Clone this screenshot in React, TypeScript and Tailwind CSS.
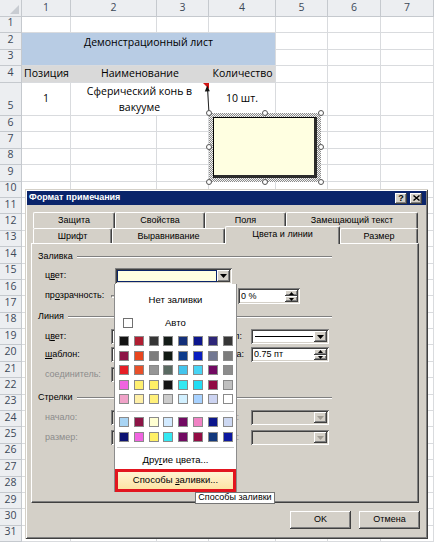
import React from "react";

const RAISED =
  "shadow-[inset_-1px_-1px_#404040,inset_1px_1px_#ffffff,inset_-2px_-2px_#808080]";
const SUNKEN =
  "shadow-[inset_1px_1px_#808080,inset_-1px_-1px_#ffffff,inset_2px_2px_#404040,inset_-2px_-2px_#d4d0c8]";

const G1 = [
  ["bg-[#141414]", "bg-[#b01e32]", "bg-[#363636]", "bg-[#141c18]", "bg-[#14307a]", "bg-[#0c168c]", "bg-[#2e2678]", "bg-[#363636]"],
  ["bg-[#8c1446]", "bg-[#e8461e]", "bg-[#7c7c7c]", "bg-[#121a14]", "bg-[#0e3c8c]", "bg-[#0a1ec0]", "bg-[#727892]", "bg-[#7c7c7c]"],
  ["bg-[#e61e26]", "bg-[#e8502a]", "bg-[#969696]", "bg-[#5a6a62]", "bg-[#44c4ec]", "bg-[#48d4f4]", "bg-[#720a62]", "bg-[#8c8c8c]"],
  ["bg-[#f064e0]", "bg-[#fff070]", "bg-[#fff066]", "bg-[#141414]", "bg-[#34e8f2]", "bg-[#22dcf4]", "bg-[#920c44]", "bg-[#c0c0c0]"],
  ["bg-[#f0a2c8]", "bg-[#fff0a8]", "bg-[#fff07a]", "bg-[#cccccc]", "bg-[#d2f0ff]", "bg-[#a8d2ff]", "bg-[#cdd4f2]", "bg-[#ffffff]"],
];
const G2 = [
  ["bg-[#a8d4f4]", "bg-[#8c1446]", "bg-[#ffffd2]", "bg-[#d2eaff]", "bg-[#720a62]", "bg-[#f082c4]", "bg-[#0c168c]", "bg-[#cdd8f2]"],
  ["bg-[#0c1272]", "bg-[#f064e0]", "bg-[#fff066]", "bg-[#34e8f2]", "bg-[#720a62]", "bg-[#920c44]", "bg-[#12387c]", "bg-[#0c18a0]"],
];

const HANDLES = [
  "left-[206px] top-[110px]",
  "left-[262px] top-[110px]",
  "left-[318px] top-[110px]",
  "left-[206px] top-[144px]",
  "left-[318px] top-[144px]",
  "left-[206px] top-[179px]",
  "left-[262px] top-[179px]",
  "left-[318px] top-[179px]",
];

function Sheet() {
  const grid = "border-r border-b border-[#d9dbde]";
  const hdr =
    "bg-[#eceef1] border-r border-b border-[#c5c9ce] text-[#3c4858] flex justify-center";
  const cells: React.ReactNode[] = [];
  for (let r = 0; r <= 31; r++) {
    for (let c = 0; c <= 7; c++) {
      const k = r + "-" + c;
      if (r === 0 && c === 0) {
        cells.push(
          <div key={k} className={hdr + " items-end justify-end p-[2px]"}>
            <div className="w-0 h-0 border-l-[9px] border-l-transparent border-b-[9px] border-b-[#c8ccd2]" />
          </div>
        );
      } else if (r === 0) {
        cells.push(
          <div key={k} className={hdr + " items-center"}>
            {c}
          </div>
        );
      } else if (c === 0) {
        cells.push(
          <div key={k} className={hdr + " items-end pb-[1px]"}>
            {r}
          </div>
        );
      } else if ((r === 2 || r === 3 || r === 4) && c <= 4) {
        if (r === 2 && c === 1) {
          cells.push(
            <div key={k} className="col-span-4 row-span-2 bg-[#b8cce4] border-r border-b border-[#d9dbde] flex justify-center pt-[2px]">
              Демонстрационный лист
            </div>
          );
        } else if (r === 4 && c === 1) {
          cells.push(
            <div key={k} className="col-span-4 bg-[#d9d9d9] border-r border-b border-[#d9dbde] grid grid-cols-[49px_138px_67px] items-center">
              <div className="text-center">Позиция</div>
              <div className="text-center">Наименование</div>
              <div className="text-center whitespace-nowrap">Количество</div>
            </div>
          );
        }
      } else if (r === 5 && c === 1) {
        cells.push(
          <div key={k} className={grid + " flex items-center justify-center"}>
            1
          </div>
        );
      } else if (r === 5 && c === 2) {
        cells.push(
          <div key={k} className={grid + " col-span-2 flex flex-col items-center justify-center leading-[16px]"}>
            <span className="whitespace-nowrap">Сферический конь в</span>
            <span>вакууме</span>
          </div>
        );
      } else if (r === 5 && c === 3) {
        continue;
      } else if (r === 5 && c === 4) {
        cells.push(
          <div key={k} className={grid + " flex items-center justify-center"}>
            10 шт.
          </div>
        );
      } else {
        cells.push(<div key={k} className={grid} />);
      }
    }
  }
  return (
    <div className="grid grid-cols-[22px_49px_86px_52px_67px_52px_53px_53px] grid-rows-[17px_16px_17px_16px_17px_33px_repeat(26,16.4px)] font-['Open_Sans',sans-serif] text-[10.5px] text-black">
      {cells}
    </div>
  );
}

function CommentShape() {
  return (
    <>
      <div className="absolute left-[203px] top-[83px] w-0 h-0 border-t-[6px] border-t-[#d01414] border-l-[6px] border-l-transparent" />
      <svg className="absolute left-[200px] top-[82px]" width="16" height="34" viewBox="0 0 16 34">
        <line x1="7.5" y1="7" x2="9" y2="31" stroke="#222" strokeWidth="1" />
        <path d="M7.2 3.5 L4.8 9.5 L9.8 9.3 Z" fill="#111" />
      </svg>
      <div className="absolute left-[209px] top-[113px] w-[112px] h-[69px] p-[4px] bg-[repeating-conic-gradient(#8a8a8a_0_25%,#f4f4f4_0_50%)] bg-[length:2px_2px]">
        <div className="w-full h-full bg-[#ffffe1] border border-black border-r-[3px] border-b-[3px] border-r-[#2a2a2a] border-b-[#2a2a2a]" />
      </div>
      {HANDLES.map((h, i) => (
        <div key={i} className={"absolute w-[6px] h-[6px] rounded-full bg-white border border-[#555] " + h} />
      ))}
    </>
  );
}

function DownArrow({ color = "#000000" }: { color?: string }) {
  return (
    <svg width="7" height="4" viewBox="0 0 7 4">
      <path d="M0 0H7L3.5 4Z" fill={color} />
    </svg>
  );
}
function UpArrow() {
  return (
    <svg width="5" height="3" viewBox="0 0 5 3">
      <path d="M0 3H5L2.5 0Z" fill="#000" />
    </svg>
  );
}
function SmallDown() {
  return (
    <svg width="5" height="3" viewBox="0 0 5 3">
      <path d="M0 0H5L2.5 3Z" fill="#000" />
    </svg>
  );
}

function DropBtn({ disabled }: { disabled?: boolean }) {
  return (
    <div className={"w-[13px] h-full flex items-center justify-center bg-[#d4d0c8] " + RAISED}>
      <DownArrow color={disabled ? "#a09c94" : "#000000"} />
    </div>
  );
}

function Combo({ className, disabled, children }: { className: string; disabled?: boolean; children?: React.ReactNode }) {
  return (
    <div className={"flex h-[15px] p-[2px] " + (disabled ? "bg-[#d4d0c8] " : "bg-white ") + SUNKEN + " " + className}>
      <div className="flex-1 flex items-center">{children}</div>
      <DropBtn disabled={disabled} />
    </div>
  );
}

function Spinner({ className, value }: { className: string; value: string }) {
  return (
    <div className={"flex h-[15px] p-[2px] bg-white " + SUNKEN + " " + className}>
      <div className="flex-1 flex items-center pl-[1px] leading-none">
        <span>{value}</span>
      </div>
      <div className="w-[13px] h-full flex flex-col">
        <div className={"flex-1 flex items-center justify-center bg-[#d4d0c8] " + RAISED}>
          <UpArrow />
        </div>
        <div className={"flex-1 flex items-center justify-center bg-[#d4d0c8] " + RAISED}>
          <SmallDown />
        </div>
      </div>
    </div>
  );
}

function GroupHeader({ label, className }: { label: string; className?: string }) {
  return (
    <div className={"flex items-center h-[12px] " + (className || "")}>
      <span>{label}</span>
      <div className="ml-[4px] flex-1 h-[2px] border-t border-t-[#808080] border-b border-b-white" />
    </div>
  );
}

function Tab({ className, label, active }: { className: string; label: string; active?: boolean }) {
  return (
    <div
      className={
        "flex items-center justify-center bg-[#d4d0c8] border-t border-l border-white border-r border-r-[#404040] rounded-tl-[2px] rounded-tr-[2px] shadow-[inset_-1px_0_#808080] " +
        (active ? "relative z-10 -mb-px pb-[2px] " : "pt-[1px] ") +
        className
      }
    >
      <span>{label}</span>
    </div>
  );
}

function Panel() {
  return (
    <div className="ml-[4px] w-[388px] h-[260px] border-l border-t border-white border-r border-b border-r-[#404040] border-b-[#404040] shadow-[inset_-1px_-1px_#808080]">
      <div className="flex flex-col pt-[7px] pl-[6px] w-[300px]">
        <GroupHeader label="Заливка" />
        <div className="mt-[5px] flex h-[16px] items-center">
          <div className="w-[77px] pl-[7px]">
            ц<u>в</u>ет:
          </div>
          <div className={"w-[117px] h-[16px] flex p-[2px] bg-white " + SUNKEN}>
            <div className="flex-1 border border-[#0a246a] bg-[#ffffe1]" />
            <DropBtn />
          </div>
        </div>
        <div className="mt-[4px] flex h-[16px] items-center">
          <div className="w-[73px] pl-[7px]">
            пр<u>о</u>зрачность:
          </div>
          <div className="w-[120px] h-[16px] flex items-center">
            <div className="w-full h-[3px] border-t border-l border-[#808080] border-b border-r border-b-white border-r-white" />
          </div>
          <Spinner className="ml-[7px] w-[62px] h-[16px]" value="0 %" />
        </div>
        <GroupHeader className="mt-[7px]" label="Линия" />
        <div className="mt-[6px] flex h-[15px] items-center">
          <div className="w-[73px] pl-[7px]">
            ц<u>в</u>ет:
          </div>
          <Combo className="w-[94px]">
            <div className="mx-[2px] h-px w-full bg-black" />
          </Combo>
          <div className="w-[46px] pr-[9px] text-right">тип:</div>
          <Combo className="w-[78px]">
            <div className="ml-[2px] mr-[1px] h-px w-full bg-black" />
          </Combo>
        </div>
        <div className="mt-[3px] flex h-[15px] items-center">
          <div className="w-[73px] pl-[7px]">
            <u>ш</u>аблон:
          </div>
          <Combo className="w-[94px]">
            <div className="mx-[2px] h-px w-full bg-black" />
          </Combo>
          <div className="w-[46px] pr-[12px] text-right">толщина:</div>
          <Spinner className="w-[78px]" value="0.75 пт" />
        </div>
        <div className="mt-[5px] flex h-[15px] items-center">
          <div className="w-[73px] pl-[7px] text-[#8c8c8c] whitespace-nowrap">соединитель:</div>
          <Combo className="w-[94px]" disabled />
        </div>
        <GroupHeader className="mt-[10px]" label="Стрелки" />
        <div className="mt-[6px] flex h-[15px] items-center">
          <div className="w-[73px] pl-[7px] text-[#8c8c8c]">начало:</div>
          <Combo className="w-[94px]" disabled />
          <div className="w-[46px] pr-[12px] text-right text-[#8c8c8c]">конец:</div>
          <Combo className="w-[78px]" disabled />
        </div>
        <div className="mt-[5px] flex h-[15px] items-center">
          <div className="w-[73px] pl-[7px] text-[#8c8c8c]">размер:</div>
          <Combo className="w-[94px]" disabled />
          <div className="w-[46px] pr-[12px] text-right text-[#8c8c8c]">размер:</div>
          <Combo className="w-[78px]" disabled />
        </div>
      </div>
    </div>
  );
}

function TitleBtn({ children }: { children: React.ReactNode }) {
  return (
    <div className={"w-[12px] h-[11px] flex items-center justify-center bg-[#d4d0c8] text-black font-bold text-[9px] leading-none " + RAISED}>
      {children}
    </div>
  );
}

function Dialog() {
  return (
    <div className="absolute left-[25px] top-[189px] w-[403px] h-[350px] bg-[#d4d0c8] flex flex-col p-[2px] shadow-[inset_1px_1px_#d4d0c8,inset_-1px_-1px_#404040,inset_2px_2px_#ffffff,inset_-2px_-2px_#808080] font-['Liberation_Sans',Arial,sans-serif] text-[9px] text-black">
      <div className="h-[14px] flex items-center bg-[#0a246a] pl-[2px] pr-[4px]">
        <span className="flex-1 text-white font-bold text-[9px]">Формат примечания</span>
        <div className="flex gap-[3px]">
          <TitleBtn>?</TitleBtn>
          <TitleBtn>
            <svg width="7" height="6" viewBox="0 0 7 6">
              <path d="M0.5 0.5L6.5 5.5M6.5 0.5L0.5 5.5" stroke="#000" strokeWidth="1.4" />
            </svg>
          </TitleBtn>
        </div>
      </div>
      <div className="mt-[7px] ml-[6px] flex flex-col">
        <div className="flex h-[16px]">
          <Tab className="w-[82px] h-[16px]" label="Защита" />
          <Tab className="w-[90px] h-[16px]" label="Свойства" />
          <Tab className="w-[81px] h-[16px]" label="Поля" />
          <Tab className="w-[132px] h-[16px]" label="Замещающий текст" />
        </div>
        <div className="flex h-[15px] items-end">
          <Tab className="w-[79px] h-[15px]" label="Шрифт" />
          <Tab className="w-[113px] h-[15px]" label="Выравнивание" />
          <Tab className="w-[115px] h-[18px]" label="Цвета и линии" active />
          <Tab className="w-[78px] h-[15px]" label="Размер" />
        </div>
      </div>
      <Panel />
      <div className="mt-[8px] flex justify-end gap-[8px] pr-[6px]">
        <div className={"w-[61px] h-[18px] flex items-center justify-center bg-[#d4d0c8] " + RAISED}>OK</div>
        <div className={"w-[61px] h-[18px] flex items-center justify-center bg-[#d4d0c8] " + RAISED}>Отмена</div>
      </div>
    </div>
  );
}

function Swatches({ rows }: { rows: string[][] }) {
  return (
    <div className="grid grid-cols-[repeat(8,10px)] gap-x-[4.8px] gap-y-[4.6px] pl-[4px]">
      {rows.flat().map((c, i) => (
        <div key={i} className={"w-[10px] h-[10px] border border-[#8a8a8a] " + c} />
      ))}
    </div>
  );
}

function ColorPopup() {
  return (
    <div className="absolute left-[114px] top-[284px] w-[123px] h-[208px] bg-white border-l border-r border-[#8c8c8c] flex flex-col font-['Liberation_Sans',Arial,sans-serif] text-[9.5px] text-black">
      <div className="mt-[9px] h-[14px] flex items-center justify-center">Нет заливки</div>
      <div className="mt-[11px] h-[10px] flex items-center">
        <div className="ml-[8px] w-[10px] h-[10px] border border-[#707070] bg-white" />
        <span className="ml-[32px]">Авто</span>
      </div>
      <div className="mt-[8px]">
        <Swatches rows={G1} />
      </div>
      <div className="mt-[7px] mx-[2px] h-px bg-[#c8c8c8]" />
      <div className="mt-[5px]">
        <Swatches rows={G2} />
      </div>
      <div className="mt-[5px] mx-[2px] h-px bg-[#c8c8c8]" />
      <div className="mt-[6px] h-[13px] flex items-center justify-center">
        <span>
          Дру<u>г</u>ие цвета...
        </span>
      </div>
      <div className="mt-auto h-[23px] border-[3px] border-[#e2151f] bg-gradient-to-b from-[#fff3d2] to-[#fde3a4] flex items-center justify-center">
        <span>
          Способы <u>з</u>аливки...
        </span>
      </div>
    </div>
  );
}

function Tooltip() {
  return (
    <div className="absolute left-[195px] top-[492px] w-[80px] h-[12px] bg-white border border-[#767676] flex items-center justify-center font-['Liberation_Sans',Arial,sans-serif] text-[9px] text-black whitespace-nowrap">
      Способы заливки
    </div>
  );
}

export default function App() {
  return (
    <div className="relative w-[434px] h-[542px] overflow-hidden bg-white">
      <Sheet />
      <CommentShape />
      <Dialog />
      <ColorPopup />
      <Tooltip />
    </div>
  );
}
